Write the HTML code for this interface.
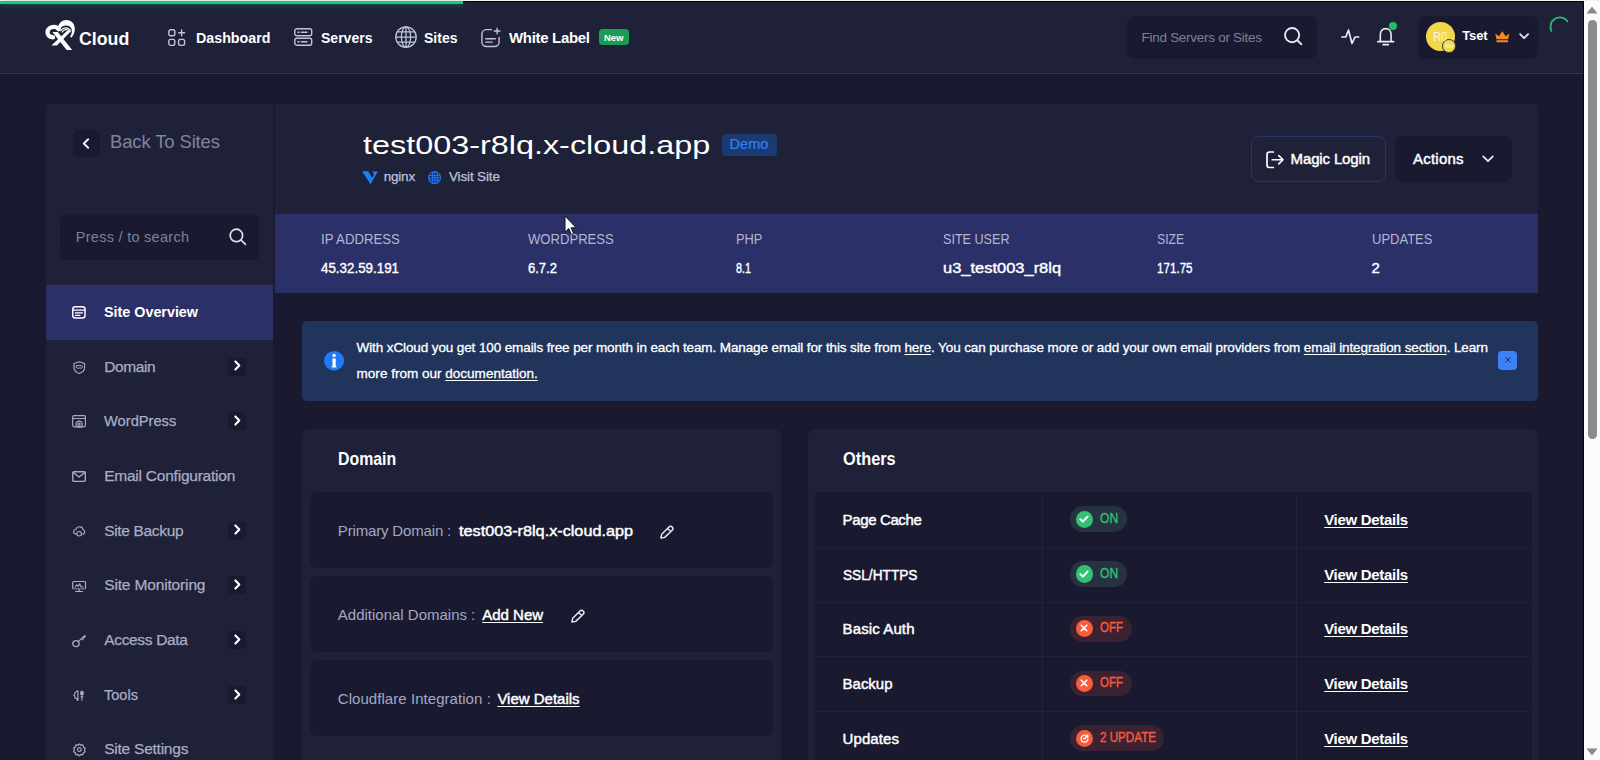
<!DOCTYPE html>
<html lang="en"><head><meta charset="utf-8"><title>xCloud - Site Overview</title>
<style>
*{box-sizing:border-box;margin:0;padding:0}
html,body{width:1600px;height:760px;overflow:hidden}
body{position:relative;background:#191a30;font-family:"Liberation Sans",sans-serif;color:#fff}
.a{position:absolute}
.t{position:absolute;white-space:nowrap;transform-origin:0 50%}
.ban{font-size:13.5px;line-height:26px;color:#fff;-webkit-text-stroke:0.3px #fff}
.ban u{text-underline-offset:2px}
svg{position:absolute;overflow:visible}
.ln{fill:none;stroke-linecap:round;stroke-linejoin:round}
.chv{position:absolute;left:227.500px;width:18.500px;height:18px;background:#191a30;border-radius:4px}
.chv svg{left:6.300px;top:2.700px}
.hl{left:815px;width:717px;height:1px;background:#20233b}
.pill{position:absolute;left:1070.200px;height:25.700px;border-radius:13px}
.pill.on{background:#263240}
.pill.off{background:#3b2232}
.pill i{position:absolute;left:5.500px;top:4.300px;width:17.100px;height:17.100px;border-radius:50%}
.pill.on i{background:#34c072}
.pill.off i{background:#f85c3a}
.pill svg{left:9.100px;top:8.500px}
.pill svg.x{left:10.050px;top:8.300px}
.pill svg.r{left:9.550px;top:8.300px}
.g{display:contents}

</style></head>
<body>
<header class="g g-topbar" aria-label="Top navigation">
<!-- top strip + loading bar -->
<div class="a" style="left:0;top:0;width:1600px;height:1px;background:#f1f1ee"></div>
<div class="a" style="left:0;top:1px;width:1584px;height:73px;background:#1e2138"></div>
<div class="a" style="left:463px;top:1px;width:1121px;height:1.200px;background:#05050c"></div>
<div class="a" style="left:0;top:1px;width:463px;height:2.600px;background:#1ec677;box-shadow:0 1px 5px rgba(30,198,119,.4)"></div>
<div class="a" style="left:0;top:73px;width:1584px;height:1px;background:#2a3467"></div>

<!-- logo -->
<svg style="left:45px;top:20px" width="30" height="30" viewBox="0 0 30 30">
  <path class="ln" stroke="#fff" stroke-width="4.300" stroke-linecap="butt" d="M8 17.400C4 17.200 2.300 14.400 2.500 12 2.800 8.600 5.600 6.900 9 6.900c2 0 3.600.8 4.700 2.200"/>
  <path fill="#fff" d="M12.800 7.800C13.400 3.400 17 0 21.500 0c4.900 0 8.300 3.800 8.300 8.800 0 3.600-1.200 6.600-3.500 8.900l-1.300-1.100c1.700-2.300 2.100-4.700 1.700-7.200C26.200 6.600 24 5.400 21 5.400c-2.800 0-5 1.500-6 3.800z"/>
  <path class="ln" stroke="#fff" stroke-width="1.250" d="M15.700 10.700C17.600 7.500 22.800 6.500 25.500 10.300"/>
  <path class="ln" stroke="#fff" stroke-width="1.250" d="M17.200 12C19 9.300 22.600 8.800 24.600 11.400"/>
  <path fill="#fff" d="M7.300 12.100h5.500L27.200 30h-5.500z"/>
  <path fill="#fff" d="M21.800 10.900h4.400L11.900 25.400H6.400z"/>
</svg>

<!-- nav icons -->
<svg style="left:168px;top:28.5px" width="18" height="17.5" viewBox="0 0 18 17.5" class="ln" stroke="#bfc4da" stroke-width="1.4">
  <rect x=".8" y=".8" width="6" height="6" rx="1.8"/><rect x=".8" y="10.4" width="6" height="6" rx="1.8"/><rect x="10.6" y="10.4" width="6" height="6" rx="1.8"/>
  <path d="M13.6.9v5.8M10.7 3.8h5.8"/>
</svg>
<svg style="left:293.5px;top:28px" width="18.5" height="18" viewBox="0 0 18.5 18" class="ln" stroke="#bfc4da" stroke-width="1.4">
  <rect x=".8" y=".8" width="16.9" height="7" rx="2"/><rect x=".8" y="10.2" width="16.9" height="7" rx="2"/>
  <path d="M4 4.3h1.2M7.4 4.3h5.6M4 13.7h1.2M7.4 13.7h5.6"/>
</svg>
<svg style="left:394.5px;top:26px" width="22" height="22" viewBox="0 0 22 22" class="ln" stroke="#bfc4da" stroke-width="1.25">
  <circle cx="11" cy="11" r="10.2"/><ellipse cx="11" cy="11" rx="4.6" ry="10.2"/>
  <path d="M11 .8v20.4M.8 11h20.4M2.4 5.8h17.2M2.4 16.2h17.2"/>
</svg>
<svg style="left:481px;top:27.5px" width="20" height="20" viewBox="0 0 20 20" class="ln" stroke="#bfc4da" stroke-width="1.4">
  <path d="M10.4 1.600H5.400C2.900 1.600.9 3.600.9 6.100v7.900c0 2.500 2 4.500 4.500 4.500h8.200c2.500 0 4.500-2 4.500-4.500V9.400"/>
  <path d="M16.100.2v5.600M13.300 3h5.600M4.800 10.700h9.500M4.800 14.100h6.500"/>
</svg>
<div class="a" style="left:599px;top:29px;width:29.500px;height:15.600px;background:#1a9c55;border-radius:3.500px"></div>

<!-- nav search -->
<div class="a" style="left:1127px;top:16px;width:190px;height:42.500px;background:#191a30;border-radius:8px"></div>
<svg style="left:1284.400px;top:27.200px" width="19" height="19" viewBox="0 0 19 19" class="ln" stroke="#e4e7f3" stroke-width="1.900"><circle cx="8.100" cy="8.100" r="7.100"/><path d="M13.300 13.300l4.100 3.900"/></svg>
<!-- activity -->
<svg style="left:1340.500px;top:29px" width="18.500" height="16" viewBox="0 0 18.500 16" class="ln" stroke="#e9ecf7" stroke-width="1.700"><path d="M.9 8h3.900l2.700-6.900 3.500 13.400 3-6.500h3.600"/></svg>
<!-- bell -->
<svg style="left:1377px;top:27px" width="17.400" height="19" viewBox="0 0 17.400 19" class="ln" stroke="#e9ecf7" stroke-width="1.600"><path d="M3.300 14.400V7.700c0-3.600 2.300-6.100 5.400-6.100s5.400 2.500 5.400 6.100v6.700"/><path d="M.9 14.700h15.600M6.200 17.700h5" stroke-width="1.700"/></svg>
<div class="a" style="left:1388.700px;top:21.800px;width:8.400px;height:8.400px;border-radius:50%;background:#27b86a"></div>
<!-- user -->
<div class="a" style="left:1418.300px;top:16px;width:120px;height:42.500px;background:#191a30;border-radius:8px"></div>
<div class="a" style="left:1425.600px;top:21.700px;width:29.400px;height:29.400px;border-radius:50%;background:#f0d84a"></div>
<div class="a" style="left:1442.400px;top:39.300px;width:13.800px;height:13.800px;border-radius:50%;background:#f2da4e;border:1px solid #33304a"></div>
<svg style="left:1495.400px;top:31.300px" width="14.600" height="11.400" viewBox="0 0 14.600 11.400"><path fill="#f28c28" d="M.3 2.600l3.600 2.700L7.300.2l3.400 5.100 3.600-2.700-1.100 5.700H1.400zM1.500 9.300h11.600v1.900H1.500z"/></svg>
<svg style="left:1518.800px;top:32.700px" width="10.200" height="6.400" viewBox="0 0 10.200 6.400" class="ln" stroke="#e3e8f6" stroke-width="1.800"><path d="M1.100 1.100l4 4 4-4"/></svg>
<!-- spinner -->
<svg style="left:1549px;top:15px" width="20" height="20" viewBox="0 0 20 20" class="ln" stroke="#2db87a" stroke-width="1.900" stroke-linecap="butt"><path d="M2.400 15.900A9.400 9.400 0 0 1 18.400 6.200"/></svg>

<span class="t" id="t0" style="left:79.0px;top:26.3px;font-size:18.4px;line-height:26px;color:#fff;font-weight:700;transform:scaleX(0.9656);">Cloud</span>
<span class="t" id="t1" style="left:195.5px;top:26.9px;font-size:15px;line-height:21px;color:#fff;font-weight:700;transform:scaleX(0.9507);">Dashboard</span>
<span class="t" id="t2" style="left:321.0px;top:26.9px;font-size:15px;line-height:21px;color:#fff;font-weight:700;transform:scaleX(0.9353);">Servers</span>
<span class="t" id="t3" style="left:424.0px;top:26.9px;font-size:15px;line-height:21px;color:#fff;font-weight:700;transform:scaleX(0.9342);">Sites</span>
<span class="t" id="t4" style="left:509.0px;top:26.9px;font-size:15px;line-height:21px;color:#fff;font-weight:700;letter-spacing:-0.317px;">White Label</span>
<span class="t" id="t5" style="left:604.0px;top:30.5px;font-size:9.5px;line-height:13px;color:#fff;font-weight:700;letter-spacing:-0.023px;">New</span>
<span class="t" id="t6" style="left:1141.5px;top:27.7px;font-size:13.5px;line-height:19px;color:#7c819b;letter-spacing:-0.277px;">Find Servers or Sites</span>
<span class="t" id="t7" style="left:1462.3px;top:27.1px;font-size:13px;line-height:18px;color:#fff;font-weight:700;letter-spacing:-0.155px;">Tset</span>
<span class="t" id="t8" style="left:1433.0px;top:27.8px;font-size:13px;line-height:18px;color:#fdf7dc;transform:scaleX(0.8541);">R0</span>
<span class="t" id="t9" style="left:1445.6px;top:42.8px;font-size:5px;line-height:7px;color:#fdf7dc;letter-spacing:0.019px;">RM</span>
</header>
<div class="g g-container">
<!-- sidebar + main panel -->
<div class="a" style="left:46px;top:104px;width:1492.400px;height:660px;background:#1e2138;border-radius:5px 5px 0 0"></div>
<div class="a" style="left:273.300px;top:104px;width:1.400px;height:660px;background:#1a1b32"></div>

</div>
<aside class="g g-sidebar" aria-label="Site menu">
<!-- back button -->
<div class="a" style="left:73px;top:130px;width:27px;height:27px;background:#191a30;border-radius:6px"></div>
<svg style="left:82.300px;top:137.900px" width="8" height="11" viewBox="0 0 8 11" class="ln" stroke="#f2f3f9" stroke-width="1.900"><path d="M6.200 1.200L1.800 5.500l4.400 4.300"/></svg>
<!-- sidebar search -->
<div class="a" style="left:60px;top:213.500px;width:199px;height:46.500px;background:#191a30;border-radius:6px"></div>
<svg style="left:228.500px;top:227.500px" width="17.500" height="17.500" viewBox="0 0 17.500 17.500" class="ln" stroke="#dfe2ee" stroke-width="1.700"><circle cx="7.400" cy="7.400" r="6.200"/><path d="M12 12l4.400 4.400"/></svg>
<!-- active -->
<div class="a" style="left:46px;top:284.700px;width:227.400px;height:55.500px;background:#2c3068"></div>
<!-- sidebar icons -->
<svg preserveAspectRatio="none" style="left:72.1px;top:305.7px" width="13.8" height="12.8" viewBox="0 0 14.500 13" class="ln" stroke="#fff" stroke-width="1.500">
  <rect x=".8" y=".8" width="12.900" height="11.400" rx="2.600"/><path d="M1 4.300h12.500M3.600 7h7.300M3.600 9.600h4.600" stroke-width="1.300"/>
</svg>
<svg preserveAspectRatio="none" style="left:72.5px;top:360.6px" width="12.5" height="13.2" viewBox="0 0 13 14.500" class="ln" stroke="#a9aec6" stroke-width="1.200">
  <path d="M6.500.8L12 2.700v5c0 2.900-2.300 4.800-5.500 6-3.200-1.200-5.500-3.100-5.500-6v-5z"/><rect x="3.400" y="5" width="6.200" height="2.800" rx=".6" stroke-width="1"/>
</svg>
<svg preserveAspectRatio="none" style="left:72.1px;top:415.0px" width="14.1" height="13.8" viewBox="0 0 14.500 14.500" class="ln" stroke="#a9aec6" stroke-width="1.200">
  <rect x=".7" y=".7" width="13.100" height="11.800" rx="1.600"/><path d="M.8 3.700h13"/><circle cx="7.250" cy="9.600" r="3.200"/><circle cx="7.250" cy="9.600" r="1.100"/>
</svg>
<svg preserveAspectRatio="none" style="left:72.4px;top:470.8px" width="14.1" height="11.2" viewBox="0 0 14.500 12" class="ln" stroke="#a9aec6" stroke-width="1.400">
  <rect x=".8" y=".8" width="12.900" height="10.400" rx="1.200"/><path d="M1.600 1.800l5.650 4.700 5.650-4.700"/>
</svg>
<svg preserveAspectRatio="none" style="left:72.9px;top:525.5px" width="12.4" height="11.2" viewBox="0 0 14 13.500" class="ln" stroke="#a9aec6" stroke-width="1.250">
  <path d="M3.400 9.800C1.700 9.600.7 8.400.7 6.900c0-1.500 1.100-2.700 2.600-2.800C3.900 2.200 5.500 1 7.300 1c2.200 0 3.900 1.500 4.200 3.600 1.100.4 1.800 1.400 1.800 2.600 0 1.500-1.100 2.600-2.600 2.700"/><circle cx="7" cy="9.400" r="2.700"/>
</svg>
<svg preserveAspectRatio="none" style="left:71.9px;top:580.9px" width="14.2" height="11.2" viewBox="0 0 14.500 13.500" class="ln" stroke="#a9aec6" stroke-width="1.200">
  <rect x=".7" y=".7" width="13.100" height="8.800" rx="1"/><path d="M3.600 12.800h7.300M7.250 9.600v3M3.200 7.200l1.600-2.600 1.600 1.800 1.400-3 1.600 3.800h2"/>
</svg>
<svg preserveAspectRatio="none" style="left:72.2px;top:634.1px" width="14.2" height="13.4" viewBox="0 0 14 14" class="ln" stroke="#a9aec6" stroke-width="1.300">
  <circle cx="3.900" cy="10.100" r="3.100"/><path d="M6.200 8L12.200 2c.5-.5 1.200.2.700.7L11.600 4M9.600 4.600l1.300 1.300"/>
</svg>
<svg preserveAspectRatio="none" style="left:73.2px;top:689.9px" width="11.8" height="11.3" viewBox="0 0 13 14" class="ln" stroke="#a9aec6" stroke-width="1.300">
  <path d="M5.200 1.400C3.200 1.600 1.800 3 2 4.600L.9 6.800l1.200.6v1.800c0 .8.600 1.300 1.400 1.300h1.100v2.300M5.400 1.200v11.400M9.800 1.200v11.600M8.600 2.200h2.600v3.200H8.600zM8.800 8.400h2.200"/>
</svg>
<svg preserveAspectRatio="none" style="left:72.6px;top:743.2px" width="12.8" height="13.2" viewBox="0 0 14.500 14.500" class="ln" stroke="#a9aec6" stroke-width="1.300">
  <path d="M7.250.9l1.700 1.500 2.250-.3.600 2.200 2 1.100-.9 2.100.9 2.100-2 1.100-.6 2.200-2.250-.3-1.700 1.500-1.700-1.500-2.250.3-.6-2.200-2-1.100.9-2.100-.9-2.100 2-1.100.6-2.200 2.250.3z"/><circle cx="7.250" cy="7.250" r="2.100"/>
</svg>
<!-- sidebar chevrons -->
<div class="chv" style="top:357.500px"><svg width="6.6" height="11" viewBox="0 0 6.6 11" class="ln" stroke="#fff" stroke-width="2.1"><path d="M1.4 1.4l3.9 4.100-3.900 4.100"/></svg></div><div class="chv" style="top:412px"><svg width="6.6" height="11" viewBox="0 0 6.6 11" class="ln" stroke="#fff" stroke-width="2.1"><path d="M1.4 1.4l3.9 4.100-3.900 4.100"/></svg></div><div class="chv" style="top:521.500px"><svg width="6.6" height="11" viewBox="0 0 6.6 11" class="ln" stroke="#fff" stroke-width="2.1"><path d="M1.4 1.4l3.9 4.100-3.900 4.100"/></svg></div>
<div class="chv" style="top:576px"><svg width="6.6" height="11" viewBox="0 0 6.6 11" class="ln" stroke="#fff" stroke-width="2.1"><path d="M1.4 1.4l3.9 4.100-3.900 4.100"/></svg></div><div class="chv" style="top:631px"><svg width="6.6" height="11" viewBox="0 0 6.6 11" class="ln" stroke="#fff" stroke-width="2.1"><path d="M1.4 1.4l3.9 4.100-3.900 4.100"/></svg></div><div class="chv" style="top:686px"><svg width="6.6" height="11" viewBox="0 0 6.6 11" class="ln" stroke="#fff" stroke-width="2.1"><path d="M1.4 1.4l3.9 4.100-3.900 4.100"/></svg></div>

<span class="t" id="t10" style="left:110.0px;top:129.2px;font-size:18.5px;line-height:26px;color:#7f849e;letter-spacing:-0.146px;">Back To Sites</span>
<span class="t" id="t11" style="left:75.8px;top:227.0px;font-size:14.5px;line-height:20px;color:#7c819b;letter-spacing:0.275px;">Press / to search</span>
<span class="t" id="t12" style="left:104.2px;top:300.8px;font-size:15.5px;line-height:22px;color:#fff;font-weight:700;transform:scaleX(0.9245);">Site Overview</span>
<span class="t" id="t13" style="left:104.2px;top:355.9px;font-size:15.5px;line-height:22px;color:#a9aec6;letter-spacing:-0.384px;-webkit-text-stroke:0.25px #a9aec6;">Domain</span>
<span class="t" id="t14" style="left:104.2px;top:410.0px;font-size:15.5px;line-height:22px;color:#a9aec6;transform:scaleX(0.9466);-webkit-text-stroke:0.25px #a9aec6;">WordPress</span>
<span class="t" id="t15" style="left:104.2px;top:465.0px;font-size:15.5px;line-height:22px;color:#a9aec6;letter-spacing:-0.231px;-webkit-text-stroke:0.25px #a9aec6;">Email Configuration</span>
<span class="t" id="t16" style="left:104.2px;top:519.7px;font-size:15.5px;line-height:22px;color:#a9aec6;letter-spacing:-0.332px;-webkit-text-stroke:0.25px #a9aec6;">Site Backup</span>
<span class="t" id="t17" style="left:104.2px;top:574.1px;font-size:15.5px;line-height:22px;color:#a9aec6;letter-spacing:-0.149px;-webkit-text-stroke:0.25px #a9aec6;">Site Monitoring</span>
<span class="t" id="t18" style="left:104.2px;top:629.1px;font-size:15.5px;line-height:22px;color:#a9aec6;letter-spacing:-0.322px;-webkit-text-stroke:0.25px #a9aec6;">Access Data</span>
<span class="t" id="t19" style="left:104.2px;top:684.0px;font-size:15.5px;line-height:22px;color:#a9aec6;transform:scaleX(0.9368);-webkit-text-stroke:0.25px #a9aec6;">Tools</span>
<span class="t" id="t20" style="left:104.2px;top:738.3px;font-size:15.5px;line-height:22px;color:#a9aec6;letter-spacing:-0.236px;-webkit-text-stroke:0.25px #a9aec6;">Site Settings</span>
</aside>
<section class="g g-siteheader" aria-label="Site header">
<!-- header -->
<div class="a" style="left:722px;top:134px;width:55px;height:22px;background:#1c3a72;border-radius:4px"></div>
<svg style="left:361.500px;top:170.800px" width="16" height="13.500" viewBox="0 0 16 13.500"><path fill="#1a80fb" d="M0 .2h6.200l4 6.700 1.900-3.300L10.300.4h5.500L8.500 13.300z"/></svg>
<svg style="left:428px;top:171.100px" width="13.200" height="13.200" viewBox="0 0 13.200 13.200"><circle cx="6.600" cy="6.600" r="6.600" fill="#2271f2"/><g fill="#1c2447"><rect x="2.300" y="2.300" width="1.700" height="1.700"/><rect x="5.100" y="1.700" width="1.300" height="2.300"/><rect x="7.500" y="1.700" width="1.300" height="2.300"/><rect x="9.800" y="2.700" width="1.200" height="1.300"/><rect x="1.500" y="5.100" width="2.500" height="1.300"/><rect x="5.100" y="5.100" width="1.300" height="1.300"/><rect x="7.500" y="5.100" width="1.300" height="1.300"/><rect x="9.800" y="5.100" width="2" height="1.300"/><rect x="1.500" y="7.500" width="2.500" height="1.300"/><rect x="5.100" y="7.500" width="1.300" height="1.300"/><rect x="7.500" y="7.500" width="1.300" height="1.300"/><rect x="9.800" y="7.500" width="2" height="1.300"/><rect x="2.600" y="9.800" width="1.400" height="1.200"/><rect x="5.100" y="9.800" width="1.300" height="1.900"/><rect x="7.500" y="9.800" width="1.300" height="1.900"/><rect x="9.800" y="9.800" width="1" height="1"/></g></svg>
<!-- magic login -->
<div class="a" style="left:1251px;top:136px;width:134.500px;height:45.500px;border:1px solid #29336a;border-radius:8px"></div>
<svg style="left:1266px;top:150.500px" width="18" height="17.500" viewBox="0 0 18 17.500" class="ln" stroke="#fff" stroke-width="1.700"><path d="M7.400 1H3.400C2 1 1 2 1 3.400v10.700c0 1.400 1 2.400 2.400 2.400h4"/><path d="M6.200 8.750h10.600M12.800 4.600l4.200 4.150-4.200 4.150"/></svg>
<!-- actions -->
<div class="a" style="left:1395px;top:136px;width:116.500px;height:45.500px;background:#191a30;border-radius:8px"></div>
<svg style="left:1481.500px;top:155px" width="12" height="8" viewBox="0 0 12 8" class="ln" stroke="#e9ebf5" stroke-width="1.800"><path d="M1.200 1.400L6 6.200l4.800-4.800"/></svg>

<span class="t" id="t21" style="left:362.7px;top:126.5px;font-size:26.4px;line-height:37px;color:#fff;transform:scaleX(1.2266);">test003-r8lq.x-cloud.app</span>
<span class="t" id="t22" style="left:729.6px;top:134.2px;font-size:14.5px;line-height:20px;color:#2f80f7;letter-spacing:0.037px;-webkit-text-stroke:0.2px #2f80f7;">Demo</span>
<span class="t" id="t23" style="left:383.7px;top:166.7px;font-size:13.5px;line-height:19px;color:#bfc3dc;letter-spacing:-0.195px;-webkit-text-stroke:0.25px #bfc3dc;">nginx</span>
<span class="t" id="t24" style="left:449.0px;top:166.7px;font-size:13.5px;line-height:19px;color:#bfc3dc;letter-spacing:-0.153px;-webkit-text-stroke:0.25px #bfc3dc;">Visit Site</span>
<span class="t" id="t25" style="left:1290.6px;top:147.8px;font-size:15px;line-height:21px;color:#fff;letter-spacing:-0.149px;-webkit-text-stroke:0.45px #fff;">Magic Login</span>
<span class="t" id="t26" style="left:1413.0px;top:147.8px;font-size:15px;line-height:21px;color:#fff;letter-spacing:0.233px;-webkit-text-stroke:0.45px #fff;">Actions</span>
</section>
<section class="g g-stats" aria-label="Site stats">
<!-- stats bar -->
<div class="a" style="left:274.700px;top:214px;width:1263.700px;height:79px;background:#2c3068"></div>
<span class="t" id="t27" style="left:321.0px;top:229.4px;font-size:14.5px;line-height:20px;color:#b3b7cf;transform:scaleX(0.9069);">IP ADDRESS</span>
<span class="t" id="t28" style="left:321.0px;top:257.2px;font-size:15px;line-height:21px;color:#fff;transform:scaleX(0.8905);-webkit-text-stroke:0.4px #fff;">45.32.59.191</span>
<span class="t" id="t29" style="left:528.0px;top:229.4px;font-size:14.5px;line-height:20px;color:#b3b7cf;transform:scaleX(0.9024);">WORDPRESS</span>
<span class="t" id="t30" style="left:528.0px;top:257.2px;font-size:15px;line-height:21px;color:#fff;transform:scaleX(0.8689);-webkit-text-stroke:0.4px #fff;">6.7.2</span>
<span class="t" id="t31" style="left:735.6px;top:229.4px;font-size:14.5px;line-height:20px;color:#b3b7cf;transform:scaleX(0.8851);">PHP</span>
<span class="t" id="t32" style="left:735.6px;top:257.2px;font-size:15px;line-height:21px;color:#fff;transform:scaleX(0.7191);-webkit-text-stroke:0.4px #fff;">8.1</span>
<span class="t" id="t33" style="left:942.5px;top:229.4px;font-size:14.5px;line-height:20px;color:#b3b7cf;transform:scaleX(0.8687);">SITE USER</span>
<span class="t" id="t34" style="left:942.5px;top:257.2px;font-size:15px;line-height:21px;color:#fff;transform:scaleX(1.0976);-webkit-text-stroke:0.4px #fff;">u3_test003_r8lq</span>
<span class="t" id="t35" style="left:1156.9px;top:229.4px;font-size:14.5px;line-height:20px;color:#b3b7cf;transform:scaleX(0.8407);">SIZE</span>
<span class="t" id="t36" style="left:1156.9px;top:257.2px;font-size:15px;line-height:21px;color:#fff;transform:scaleX(0.7758);-webkit-text-stroke:0.4px #fff;">171.75</span>
<span class="t" id="t37" style="left:1371.6px;top:229.4px;font-size:14.5px;line-height:20px;color:#b3b7cf;transform:scaleX(0.8959);">UPDATES</span>
<span class="t" id="t38" style="left:1371.6px;top:257.2px;font-size:15px;line-height:21px;color:#fff;-webkit-text-stroke:0.4px #fff;">2</span>
</section>
<div class="g g-contentbg">
<!-- page bg under panel -->
<div class="a" style="left:274.700px;top:293px;width:1263.700px;height:470px;background:#191a30"></div>

</div>
<section class="g g-banner" aria-label="Email notice">
<!-- banner -->
<div class="a" style="left:302.200px;top:321px;width:1236.200px;height:80px;background:#21345c;border-radius:5px"></div>
<svg style="left:323.800px;top:351px" width="20.200" height="19.400" viewBox="0 0 20.200 19.400"><ellipse cx="10.100" cy="9.700" rx="10.100" ry="9.700" fill="#1f7bf6"/><circle cx="10.100" cy="4.500" r="1.700" fill="#fff"/><path fill="#fff" d="M8.500 7.600h3.200v7.600h.700v1.400H7.800v-1.400h.700z"/></svg>
<div class="a" style="left:1498px;top:351px;width:19px;height:19px;background:#3b82f6;border-radius:4px"></div>
<svg style="left:1504.700px;top:357.400px" width="5.800" height="5.800" viewBox="0 0 5.800 5.800" class="ln" stroke="#1d2a5e" stroke-width="1"><path d="M.5.500l4.800 4.800M5.300.500L.5 5.300"/></svg>

<p class="t ban" id="ban1" style="left:356.6px;top:334.8px;letter-spacing:-0.113px">With xCloud you get 100 emails free per month in each team. Manage email for this site from <u>here</u>. You can purchase more or add your own email providers from <u>email integration section</u>. Learn</p>
<p class="t ban" id="ban2" style="left:356.6px;top:360.8px;letter-spacing:0.013px">more from our <u>documentation.</u></p>
</section>
<section class="g g-domain" aria-label="Domain">
<!-- domain card -->
<div class="a" style="left:302.200px;top:429px;width:478.400px;height:340px;background:#1e2138;border-radius:7px"></div>
<div class="a" style="left:310px;top:492.200px;width:463px;height:76.300px;background:#191a30;border-radius:6px"></div>
<div class="a" style="left:310px;top:576px;width:463px;height:76.400px;background:#191a30;border-radius:6px"></div>
<div class="a" style="left:310px;top:659.800px;width:463px;height:76.300px;background:#191a30;border-radius:6px"></div>
<svg style="left:659.700px;top:524.500px" width="14.200" height="13.800" viewBox="0 0 14.200 13.800"><g class="ln" stroke="#e6e9f5" stroke-width="1.450"><path d="M.9 13l.8-3.700L9 2c.9-.9 2.300-.9 3.200 0s.9 2.300 0 3.200L4.700 12.400zM7.600 3.500l3.100 3.100"/></g></svg>
<svg style="left:570.600px;top:608.500px" width="14.200" height="13.800" viewBox="0 0 14.200 13.800"><g class="ln" stroke="#e6e9f5" stroke-width="1.450"><path d="M.9 13l.8-3.700L9 2c.9-.9 2.300-.9 3.200 0s.9 2.300 0 3.200L4.700 12.400zM7.600 3.500l3.100 3.100"/></g></svg>

<span class="t" id="t39" style="left:337.8px;top:447.4px;font-size:17.5px;line-height:24px;color:#fff;font-weight:700;transform:scaleX(0.9067);">Domain</span>
<span class="t" id="t40" style="left:337.8px;top:519.7px;font-size:15px;line-height:21px;color:#a3a8c1;letter-spacing:-0.161px;">Primary Domain :</span>
<span class="t" id="t41" style="left:459.0px;top:519.7px;font-size:15px;line-height:21px;color:#fff;transform:scaleX(1.0812);-webkit-text-stroke:0.45px #fff;">test003-r8lq.x-cloud.app</span>
<span class="t" id="t42" style="left:337.8px;top:604.0px;font-size:15px;line-height:21px;color:#a3a8c1;letter-spacing:-0.004px;">Additional Domains :</span>
<span class="t" id="t43" style="left:482.3px;top:604.0px;font-size:15px;line-height:21px;color:#fff;letter-spacing:-0.012px;-webkit-text-stroke:0.45px #fff;text-decoration:underline;text-underline-offset:2px;">Add New</span>
<span class="t" id="t44" style="left:337.8px;top:688.0px;font-size:15px;line-height:21px;color:#a3a8c1;letter-spacing:0.054px;">Cloudflare Integration :</span>
<span class="t" id="t45" style="left:497.4px;top:688.0px;font-size:15px;line-height:21px;color:#fff;letter-spacing:-0.006px;-webkit-text-stroke:0.45px #fff;text-decoration:underline;text-underline-offset:2px;">View Details</span>
</section>
<section class="g g-others" aria-label="Others">
<!-- others card -->
<div class="a" style="left:808.400px;top:429px;width:730px;height:340px;background:#1e2138;border-radius:7px"></div>
<div class="a" style="left:815.300px;top:492.200px;width:716.500px;height:280px;background:#191a30"></div>
<div class="a hl" style="top:547px"></div><div class="a hl" style="top:601.500px"></div><div class="a hl" style="top:656px"></div><div class="a hl" style="top:711px"></div>
<div class="a" style="left:1042px;top:492.500px;width:1px;height:280px;background:#20233b"></div>
<div class="a" style="left:1296px;top:492.500px;width:1px;height:280px;background:#20233b"></div>
<!-- status pills -->
<div class="pill on" style="top:506.400px;width:57px"><i></i><svg width="10" height="8" viewBox="0 0 10 8" class="ln" stroke="#fff" stroke-width="2"><path d="M1.400 4.200l2.500 2.400 4.700-5"/></svg></div>
<div class="pill on" style="top:561.200px;width:57px"><i></i><svg width="10" height="8" viewBox="0 0 10 8" class="ln" stroke="#fff" stroke-width="2"><path d="M1.400 4.200l2.500 2.400 4.700-5"/></svg></div>
<div class="pill off" style="top:616px;width:62px"><i></i><svg width="8" height="8" viewBox="0 0 8 8" class="ln x" stroke="#fff" stroke-width="1.600"><path d="M1.200 1.200l5.600 5.600M6.800 1.200L1.200 6.800"/></svg></div>
<div class="pill off" style="top:670.700px;width:62px"><i></i><svg width="8" height="8" viewBox="0 0 8 8" class="ln x" stroke="#fff" stroke-width="1.600"><path d="M1.200 1.200l5.600 5.600M6.800 1.200L1.200 6.800"/></svg></div>
<div class="pill off" style="top:725.400px;width:94.300px"><i></i><svg width="9" height="9" viewBox="0 0 9 9" class="ln r" stroke="#fff" stroke-width="1.400"><path d="M7.400 2.600A3.500 3.500 0 1 0 8 5.200M7.800.8v2.200H5.600M3.600 4.500h2"/></svg></div>
<span class="t" id="t46" style="left:842.6px;top:447.4px;font-size:17.5px;line-height:24px;color:#fff;font-weight:700;transform:scaleX(0.9343);">Others</span>
<span class="t" id="t47" style="left:842.6px;top:508.8px;font-size:15px;line-height:21px;color:#fff;letter-spacing:-0.374px;-webkit-text-stroke:0.45px #fff;">Page Cache</span>
<span class="t" id="t48" style="left:1100.2px;top:509.1px;font-size:13.8px;line-height:19px;color:#30bd78;transform:scaleX(0.8791);-webkit-text-stroke:0.4px #30bd78;">ON</span>
<span class="t" id="t49" style="left:1324.2px;top:508.8px;font-size:15px;line-height:21px;color:#fff;font-weight:700;letter-spacing:-0.298px;text-decoration:underline;text-underline-offset:2px;">View Details</span>
<span class="t" id="t50" style="left:842.6px;top:563.5px;font-size:15px;line-height:21px;color:#fff;transform:scaleX(0.9120);-webkit-text-stroke:0.45px #fff;">SSL/HTTPS</span>
<span class="t" id="t51" style="left:1100.2px;top:563.8px;font-size:13.8px;line-height:19px;color:#30bd78;transform:scaleX(0.8791);-webkit-text-stroke:0.4px #30bd78;">ON</span>
<span class="t" id="t52" style="left:1324.2px;top:563.5px;font-size:15px;line-height:21px;color:#fff;font-weight:700;letter-spacing:-0.298px;text-decoration:underline;text-underline-offset:2px;">View Details</span>
<span class="t" id="t53" style="left:842.6px;top:618.1px;font-size:15px;line-height:21px;color:#fff;letter-spacing:0.112px;-webkit-text-stroke:0.45px #fff;">Basic Auth</span>
<span class="t" id="t54" style="left:1100.2px;top:618.4px;font-size:13.8px;line-height:19px;color:#f85c3a;transform:scaleX(0.8371);-webkit-text-stroke:0.4px #f85c3a;">OFF</span>
<span class="t" id="t55" style="left:1324.2px;top:618.1px;font-size:15px;line-height:21px;color:#fff;font-weight:700;letter-spacing:-0.298px;text-decoration:underline;text-underline-offset:2px;">View Details</span>
<span class="t" id="t56" style="left:842.6px;top:672.8px;font-size:15px;line-height:21px;color:#fff;letter-spacing:-0.029px;-webkit-text-stroke:0.45px #fff;">Backup</span>
<span class="t" id="t57" style="left:1100.2px;top:673.1px;font-size:13.8px;line-height:19px;color:#f85c3a;transform:scaleX(0.8371);-webkit-text-stroke:0.4px #f85c3a;">OFF</span>
<span class="t" id="t58" style="left:1324.2px;top:672.8px;font-size:15px;line-height:21px;color:#fff;font-weight:700;letter-spacing:-0.298px;text-decoration:underline;text-underline-offset:2px;">View Details</span>
<span class="t" id="t59" style="left:842.6px;top:727.5px;font-size:15px;line-height:21px;color:#fff;letter-spacing:0.087px;-webkit-text-stroke:0.45px #fff;">Updates</span>
<span class="t" id="t60" style="left:1100.2px;top:727.8px;font-size:13.8px;line-height:19px;color:#f85c3a;transform:scaleX(0.8427);-webkit-text-stroke:0.4px #f85c3a;">2 UPDATE</span>
<span class="t" id="t61" style="left:1324.2px;top:727.5px;font-size:15px;line-height:21px;color:#fff;font-weight:700;letter-spacing:-0.298px;text-decoration:underline;text-underline-offset:2px;">View Details</span>
</section>
<div class="g g-scrollbar">
<!-- scrollbar -->
<div class="a" style="left:1583.100px;top:1px;width:1.100px;height:759px;background:#05050c"></div>
<div class="a" style="left:1584px;top:1px;width:16px;height:759px;background:#fbfbfb"></div>
<div class="a" style="left:1588px;top:20px;width:9px;height:419px;background:#8c8a8a;border-radius:4.500px"></div>
<svg style="left:1586px;top:6px" width="12" height="8" viewBox="0 0 12 8"><path fill="#8b8b8b" d="M6 .5L11.500 7.500H.5z"/></svg>
<svg style="left:1586px;top:748px" width="12" height="8" viewBox="0 0 12 8"><path fill="#8b8b8b" d="M6 7.500L11.500.5H.5z"/></svg>


</div>
<div class="g g-cursor">
<!-- cursor -->
<svg style="left:564.100px;top:215px" width="14" height="22" viewBox="0 0 14 22"><path fill="#fff" stroke="#111" stroke-width="1" stroke-linejoin="round" d="M1 1v16.200l3.800-3.600 2.500 6 2.300-1-2.500-5.800H12.200z"/></svg>


</div>
</body></html>
